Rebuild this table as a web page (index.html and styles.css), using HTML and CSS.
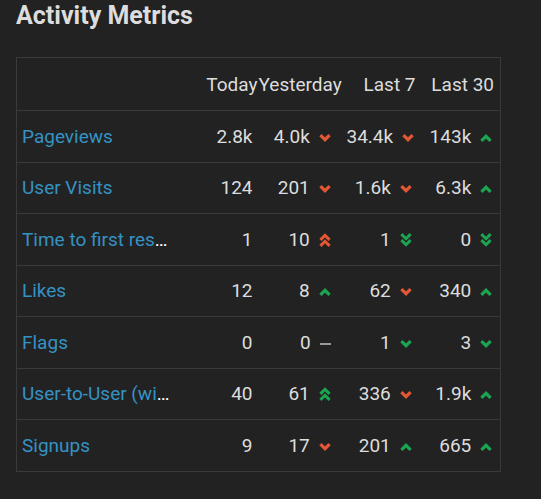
FILE: index.html
```html
<!DOCTYPE html>
<html>
<head>
<meta charset="utf-8">
<link rel="stylesheet" href="styles.css">
</head>
<body>
<svg width="0" height="0" class="defs">
  <symbol id="up" viewBox="0 0 12 8"><path d="M1.4 6.9 L6 2.3 L10.6 6.9" fill="none" stroke="currentColor" stroke-width="3.2"/></symbol>
  <symbol id="down" viewBox="0 0 12 8"><path d="M1.4 1.1 L6 5.7 L10.6 1.1" fill="none" stroke="currentColor" stroke-width="3.2"/></symbol>
  <symbol id="dup" viewBox="0 0 12 14"><path d="M1.4 6.9 L6 2.3 L10.6 6.9 M1.4 12.9 L6 8.3 L10.6 12.9" fill="none" stroke="currentColor" stroke-width="3"/></symbol>
  <symbol id="ddown" viewBox="0 0 12 14"><path d="M1.4 1.1 L6 5.7 L10.6 1.1 M1.4 7.1 L6 11.7 L10.6 7.1" fill="none" stroke="currentColor" stroke-width="3"/></symbol>
</svg>
<div class="page">
  <h1 class="title">Activity Metrics</h1>
  <table class="metrics">
    <colgroup>
      <col class="c-label"><col class="c-today"><col class="c-yest"><col class="c-l7"><col class="c-l30">
    </colgroup>
    <thead>
      <tr><th></th><th>Today</th><th>Yesterday</th><th>Last 7</th><th>Last 30</th></tr>
    </thead>
    <tbody>
      <tr>
        <td class="label"><a>Pageviews</a></td>
        <td>2.8k</td>
        <td>4.0k <svg class="tr down-c"><use href="#down"/></svg></td>
        <td>34.4k <svg class="tr down-c"><use href="#down"/></svg></td>
        <td>143k <svg class="tr up-c"><use href="#up"/></svg></td>
      </tr>
      <tr>
        <td class="label"><a>User Visits</a></td>
        <td>124</td>
        <td>201 <svg class="tr down-c"><use href="#down"/></svg></td>
        <td>1.6k <svg class="tr down-c"><use href="#down"/></svg></td>
        <td>6.3k <svg class="tr up-c"><use href="#up"/></svg></td>
      </tr>
      <tr>
        <td class="label"><a>Time to first response</a></td>
        <td>1</td>
        <td>10 <svg class="tr dbl down-c"><use href="#dup"/></svg></td>
        <td>1 <svg class="tr dbl up-c"><use href="#ddown"/></svg></td>
        <td>0 <svg class="tr dbl up-c"><use href="#ddown"/></svg></td>
      </tr>
      <tr>
        <td class="label"><a>Likes</a></td>
        <td>12</td>
        <td>8 <svg class="tr up-c"><use href="#up"/></svg></td>
        <td>62 <svg class="tr down-c"><use href="#down"/></svg></td>
        <td>340 <svg class="tr up-c"><use href="#up"/></svg></td>
      </tr>
      <tr>
        <td class="label"><a>Flags</a></td>
        <td>0</td>
        <td>0 <span class="dash"></span></td>
        <td>1 <svg class="tr up-c"><use href="#down"/></svg></td>
        <td>3 <svg class="tr up-c"><use href="#down"/></svg></td>
      </tr>
      <tr>
        <td class="label"><a>User-to-User (with replies)</a></td>
        <td>40</td>
        <td>61 <svg class="tr dbl up-c"><use href="#dup"/></svg></td>
        <td>336 <svg class="tr down-c"><use href="#down"/></svg></td>
        <td>1.9k <svg class="tr up-c"><use href="#up"/></svg></td>
      </tr>
      <tr>
        <td class="label"><a>Signups</a></td>
        <td>9</td>
        <td>17 <svg class="tr down-c"><use href="#down"/></svg></td>
        <td>201 <svg class="tr up-c"><use href="#up"/></svg></td>
        <td>665 <svg class="tr up-c"><use href="#up"/></svg></td>
      </tr>
    </tbody>
  </table>
</div>
</body>
</html>
```
FILE: styles.css
```css
html, body {
  margin: 0;
  background: #222222;
}
.defs { position: absolute; }
.page {
  padding: 0 0 0 16px;
  font-family: Roboto, "Liberation Sans", sans-serif;
  color: #dddddd;
}
.title {
  margin: 0;
  padding-top: 2px;
  font-size: 25px;
  font-weight: 700;
  line-height: 28px;
  color: #dddddd;
}
.metrics {
  margin-top: 27px;
  border-collapse: collapse;
  table-layout: fixed;
  width: 485px;
  border: 1px solid #3a3a3a;
  font-size: 19px;
}
.c-label { width: 184px; }
.c-today { width: 58px; }
.c-yest { width: 88px; }
.c-l7 { width: 75px; }
.c-l30 { width: 79px; }
.metrics th {
  height: 52px;
  font-weight: 400;
  text-align: right;
  padding: 0 6px 0 0;
  border-bottom: 1px solid #3a3a3a;
  white-space: nowrap;
}
.metrics th:nth-child(2) { padding-right: 1px; }
.metrics td {
  height: 50.5px;
  text-align: right;
  padding: 0 6px 0 0;
  border-bottom: 1px solid #3a3a3a;
  white-space: nowrap;
}
.metrics td:nth-child(3) { padding-right: 16px; }
.metrics td:nth-child(4) { padding-right: 10px; }
.metrics td:nth-child(5) { padding-right: 8px; }
.metrics td.label {
  text-align: left;
  padding: 0 30px 0 5px;
  overflow: hidden;
  text-overflow: ellipsis;
  color: #ffffff;
}
.label a {
  color: #3592c4;
}
.tr {
  width: 12px;
  height: 8px;
  margin-left: 4px;
  vertical-align: 1px;
}
.tr.dbl {
  height: 14px;
  vertical-align: -1px;
}
.down-c { color: #e45735; }
.up-c { color: #1ca551; }
.dash {
  display: inline-block;
  width: 11px;
  height: 2px;
  margin-left: 4px;
  background: #999999;
  vertical-align: 4px;
}
```
